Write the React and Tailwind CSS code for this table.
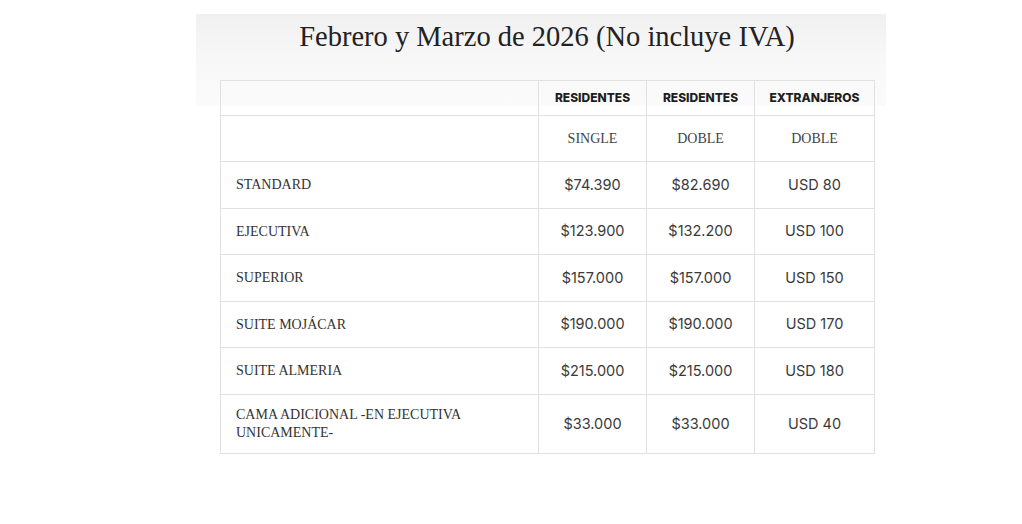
const rows = [
  ["STANDARD", "$74.390", "$82.690", "USD 80"],
  ["EJECUTIVA", "$123.900", "$132.200", "USD 100"],
  ["SUPERIOR", "$157.000", "$157.000", "USD 150"],
  ["SUITE MOJÁCAR", "$190.000", "$190.000", "USD 170"],
  ["SUITE ALMERIA", "$215.000", "$215.000", "USD 180"],
];

const serif = "font-['Liberation_Serif',serif]";
const sans = "font-['Inter',sans-serif]";

export default function App() {
  return (
    <div className="w-[1022px] h-[524px] bg-white">
      <div className="ml-[196px] pt-[14px] w-[690px]">
        <div className="bg-[linear-gradient(to_bottom,#f0f0f0_0px,#f7f7f7_40px,#fbfbfb_92px,#ffffff_92px)] pl-[24px] pr-[12px]">
          <h1 className={`${serif} text-[28.5px] leading-[46px] text-[#222] text-center pb-[20px]`}>
            Febrero y Marzo de 2026 (No incluye IVA)
          </h1>
          <table className="w-[654px] border-collapse table-fixed">
            <colgroup>
              <col className="w-[318px]" />
              <col className="w-[108px]" />
              <col className="w-[108px]" />
              <col className="w-[120px]" />
            </colgroup>
            <thead>
              <tr className="h-[35px]">
                <th className="border border-[#e1e1e1]"></th>
                {["RESIDENTES", "RESIDENTES", "EXTRANJEROS"].map((h, i) => (
                  <th key={i} className={`border border-[#e1e1e1] ${sans} text-[12px] font-extrabold text-[#1e1e1e] text-center`}>
                    {h}
                  </th>
                ))}
              </tr>
            </thead>
            <tbody>
              <tr className="h-[46px]">
                <td className="border border-[#e1e1e1]"></td>
                {["SINGLE", "DOBLE", "DOBLE"].map((h, i) => (
                  <td key={i} className={`border border-[#e1e1e1] ${serif} text-[14px] text-[#444] text-center`}>
                    {h}
                  </td>
                ))}
              </tr>
              {rows.map((r) => (
                <tr key={r[0]} className="h-[46.5px]">
                  <td className={`border border-[#e1e1e1] ${serif} text-[14px] text-[#333] pl-[15px]`}>{r[0]}</td>
                  {r.slice(1).map((v, i) => (
                    <td key={i} className={`border border-[#e1e1e1] ${sans} text-[14.5px] text-[#3a3a3a] text-center`}>
                      {v}
                    </td>
                  ))}
                </tr>
              ))}
              <tr className="h-[59px]">
                <td className={`border border-[#e1e1e1] ${serif} text-[14px] leading-[18px] text-[#333] pl-[15px] pr-[40px]`}>
                  CAMA ADICIONAL -EN EJECUTIVA UNICAMENTE-
                </td>
                {["$33.000", "$33.000", "USD 40"].map((v, i) => (
                  <td key={i} className={`border border-[#e1e1e1] ${sans} text-[14.5px] text-[#3a3a3a] text-center`}>
                    {v}
                  </td>
                ))}
              </tr>
            </tbody>
          </table>
        </div>
      </div>
    </div>
  );
}
